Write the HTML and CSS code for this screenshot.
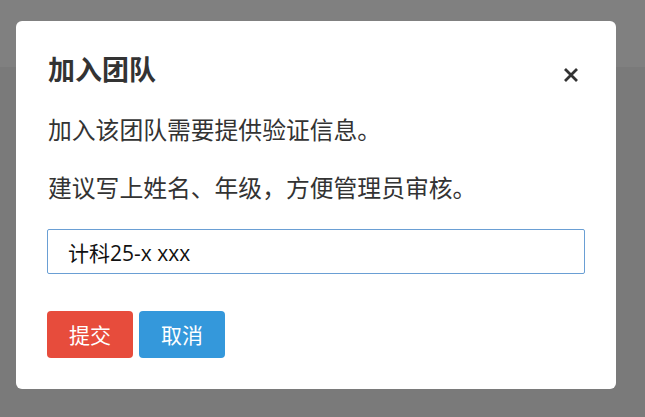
FILE: index.html
```html
<!DOCTYPE html>
<html lang="zh-CN">
<head>
<meta charset="utf-8">
<title>加入团队</title>
<link rel="stylesheet" href="styles.css">
</head>
<body>
<div class="topbar"></div>
<div class="overlay">
  <div class="modal">
    <div class="modal-header">
      <h4 class="modal-title">加入团队</h4>
      <button class="close" type="button" aria-label="关闭">
        <svg width="16" height="16" viewBox="0 0 16 16"><path d="M2 2 L14 14 M14 2 L2 14" stroke="#333" stroke-width="2.8" stroke-linecap="butt" fill="none"/></svg>
      </button>
    </div>
    <p class="text">加入该团队需要提供验证信息。</p>
    <p class="text">建议写上姓名、年级，方便管理员审核。</p>
    <input class="field" type="text" value="计科25-x xxx">
    <div class="actions">
      <button class="btn btn-submit" type="button">提交</button>
      <button class="btn btn-cancel" type="button">取消</button>
    </div>
  </div>
</div>
</body>
</html>
```
FILE: styles.css
```css
html, body {
  margin: 0;
  padding: 0;
}
body {
  background: #7a7a7a;
  font-family: "Noto Sans CJK SC", "Open Sans", sans-serif;
  color: #333;
  height: 417px;
  overflow: hidden;
}
.topbar {
  height: 67px;
  background: #808080;
}
.overlay {
  position: fixed;
  top: 0;
  left: 0;
  right: 0;
  bottom: 0;
  padding: 21px 0 0 16px;
}
.modal {
  width: 600px;
  box-sizing: border-box;
  background: #fff;
  border-radius: 6px;
  padding: 28px 31px 31px 31px;
}
.modal-header {
  display: flex;
  align-items: center;
  justify-content: space-between;
  height: 40px;
  padding-left: 1px;
}
.modal-title {
  margin: 0;
  font-size: 27px;
  line-height: 40px;
  font-weight: 700;
  color: #333;
}
.close {
  border: 0;
  background: none;
  padding: 0;
  margin: 12px 6px 0 0;
  width: 16px;
  height: 16px;
  display: flex;
}
.text {
  margin: 22.5px 0 0;
  padding-left: 1px;
  font-size: 23.8px;
  line-height: 34px;
  color: #333;
}
.text + .text {
  margin-top: 24.5px;
}
.field {
  display: block;
  margin-top: 25px;
  width: 538px;
  height: 45px;
  box-sizing: border-box;
  border: 1px solid #6a9fd4;
  border-radius: 2px;
  padding: 0 0 0 20px;
  font-family: "Open Sans", "Noto Sans CJK SC", sans-serif;
  font-size: 21px;
  color: #111;
  outline: none;
}
.actions {
  display: flex;
  gap: 6px;
  margin-top: 37px;
}
.btn {
  width: 86px;
  height: 46.5px;
  border: 0;
  border-radius: 4px;
  color: #fff;
  font-family: "Noto Sans CJK SC", sans-serif;
  font-size: 21px;
  padding: 0;
}
.btn-submit {
  background: #e74c3c;
}
.btn-cancel {
  background: #3498db;
}
```
